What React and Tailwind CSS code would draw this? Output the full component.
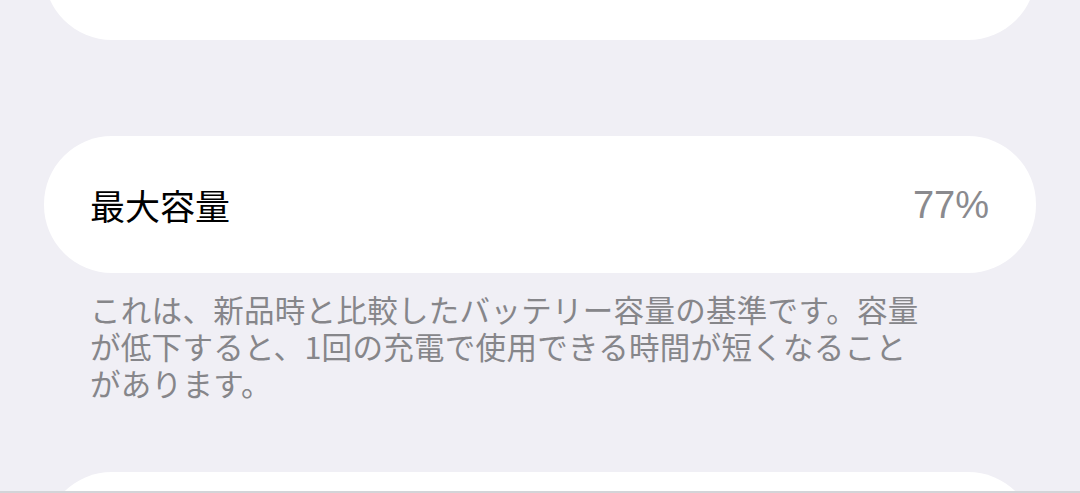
export default function App() {
  return (
    <div
      className="h-[493px] overflow-hidden bg-[#f0eff5] flex flex-col border-b-2 border-[#d4d4d8]"
      style={{ fontFamily: '"Noto Sans CJK JP", "Noto Sans", sans-serif' }}
    >
      {/* previous group, scrolled mostly out of view */}
      <div className="mx-[44px] -mt-[97px] h-[137px] shrink-0 rounded-[68px] bg-white" />

      <div className="mx-[44px] mt-[96px] h-[137px] shrink-0 rounded-[68px] bg-white flex items-center justify-between pl-[46px] pr-[47px]">
        <span className="text-[35px] leading-none text-black">最大容量</span>
        <span className="text-[38px] leading-none text-[#8a8a8e]" style={{ fontFamily: '"Liberation Sans", sans-serif' }}>
          77%
        </span>
      </div>

      <div className="mt-[18px] ml-[90px] text-[30.5px] leading-[37px] tracking-[0.3px] text-[#86868a] whitespace-nowrap">
        <p>これは、新品時と比較したバッテリー容量の基準です。容量</p>
        <p>が低下すると、1回の充電で使用できる時間が短くなること</p>
        <p>があります。</p>
      </div>

      <div className="mx-[44px] mt-[70px] h-[137px] shrink-0 rounded-[68px] bg-white" />
    </div>
  )
}
